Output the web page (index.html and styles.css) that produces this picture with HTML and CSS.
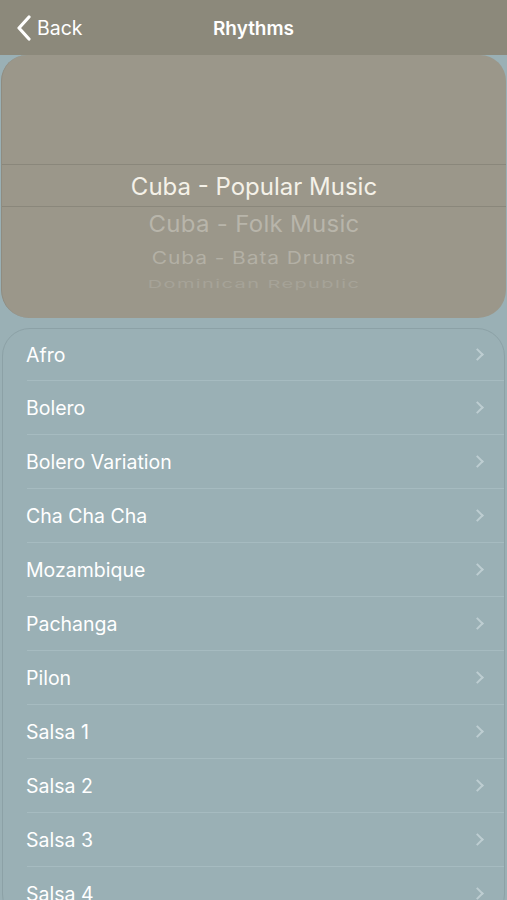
FILE: index.html
```html
<!DOCTYPE html>
<html lang="en">
<head>
  <meta charset="UTF-8">
  <title>Rhythms</title>
  <link rel="stylesheet" href="styles.css">
</head>
<body>
  <div class="navbar">
    <a class="back" href="#">
      <svg width="16" height="26" viewBox="0 0 16 26"><path d="M13 2 L3 13 L13 24" fill="none" stroke="#fff" stroke-width="3.2" stroke-linecap="round" stroke-linejoin="round"/></svg>
      <span>Back</span>
    </a>
    <div class="title">Rhythms</div>
  </div>

  <div class="picker">
    <div class="picker-band">
      <div class="opt selected">Cuba - Popular Music</div>
    </div>
    <div class="opt below1">Cuba - Folk Music</div>
    <div class="opt below2">Cuba - Bata Drums</div>
    <div class="opt below3">Dominican Republic</div>
  </div>

  <ul class="list">
    <li><span>Afro</span><i class="chev"></i></li>
    <li><span>Bolero</span><i class="chev"></i></li>
    <li><span>Bolero Variation</span><i class="chev"></i></li>
    <li><span>Cha Cha Cha</span><i class="chev"></i></li>
    <li><span>Mozambique</span><i class="chev"></i></li>
    <li><span>Pachanga</span><i class="chev"></i></li>
    <li><span>Pilon</span><i class="chev"></i></li>
    <li><span>Salsa 1</span><i class="chev"></i></li>
    <li><span>Salsa 2</span><i class="chev"></i></li>
    <li><span>Salsa 3</span><i class="chev"></i></li>
    <li><span>Salsa 4</span><i class="chev"></i></li>
  </ul>
</body>
</html>
```

FILE: styles.css
```css
* {
  box-sizing: border-box;
}
body {
  margin: 0;
  height: 900px;
  overflow: hidden;
  background: #9ab0b5;
  font-family: Inter, "Liberation Sans", sans-serif;
  color: #fff;
}
.navbar {
  height: 55px;
  background: #8c897b;
  display: flex;
  align-items: center;
  justify-content: center;
  position: relative;
}
.back {
  position: absolute;
  left: 16px;
  top: 15px;
  display: flex;
  align-items: center;
  gap: 5px;
  color: #fff;
  text-decoration: none;
  font-size: 19.5px;
}
.title {
  font-size: 19px;
  font-weight: 600;
  padding-top: 2px;
}
.picker {
  margin: 0 1px;
  height: 263px;
  background: #9b978a;
  border-radius: 26px 26px 28px 28px;
  border-left: 1px solid #8f8c80;
  padding-top: 109px;
  overflow: hidden;
  display: flex;
  flex-direction: column;
  align-items: center;
}
.picker-band {
  align-self: stretch;
  height: 43px;
  border-top: 1px solid #8a877b;
  border-bottom: 1px solid #8a877b;
  display: flex;
  align-items: center;
  justify-content: center;
}
.opt {
  font-size: 24px;
  line-height: 29px;
  white-space: nowrap;
}
.selected {
  color: #f4f1e8;
  padding-top: 2px;
}
.below1 {
  margin-top: 3px;
  color: #b8b5aa;
  letter-spacing: 0.3px;
  transform: scaleY(0.93);
}
.below2 {
  margin-top: 7px;
  font-size: 21px;
  line-height: 24px;
  letter-spacing: 0.9px;
  color: #b3b0a5;
  transform: scaleY(0.8);
}
.below3 {
  margin-top: 3px;
  font-size: 20px;
  line-height: 23px;
  letter-spacing: 1.4px;
  color: #a6a398;
  transform: scaleY(0.55);
}
.list {
  list-style: none;
  margin: 10px 2px 0;
  padding: 0;
  background: #9ab0b5;
  border: 1px solid #8ca1a6;
  border-radius: 28px;
  overflow: hidden;
}
.list li {
  height: 54px;
  margin-left: 24px;
  padding-right: 22px;
  display: flex;
  align-items: center;
  justify-content: space-between;
  border-bottom: 1px solid #a6bbc0;
  font-size: 19.5px;
}
.list li:first-child {
  height: 52px;
}
.list li span {
  margin-left: -1px;
}
.chev {
  width: 9px;
  height: 9px;
  border-right: 2px solid #bdcdd1;
  border-top: 2px solid #bdcdd1;
  transform: rotate(45deg);
}
```
